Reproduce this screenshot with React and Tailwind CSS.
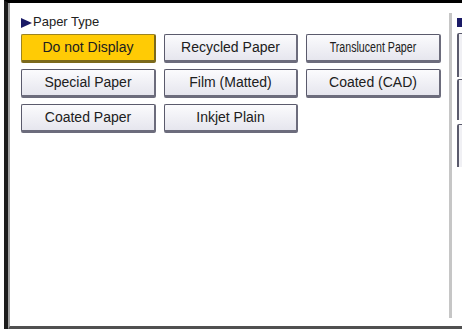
import React from 'react'

const rows = [
  ['Do not Display', 'Recycled Paper', 'Translucent Paper'],
  ['Special Paper', 'Film (Matted)', 'Coated (CAD)'],
  ['Coated Paper', 'Inkjet Plain'],
]

function PaperButton({ label, selected, narrow, width }) {
  return (
    <div
      className={`h-[29px] ${width} flex items-center justify-center rounded-[2px] border border-b-[3px] border-r-[2px] text-[14px] text-[#202020] ${
        selected
          ? 'bg-[#ffcb05] border-[#9c8420] border-b-[#7c6a1c] border-r-[#7c6a1c]'
          : 'bg-linear-to-b from-[#fbfbfd] to-[#e6e6ee] border-[#5a5a6c] border-b-[#6c6c7c] border-r-[#6c6c7c]'
      }`}
    >
      <span className={narrow ? 'inline-block scale-x-[0.76] whitespace-nowrap' : 'whitespace-nowrap'}>{label}</span>
    </div>
  )
}

export default function App() {
  const widths = ['w-[135px]', 'w-[134px]', 'w-[135px]']

  return (
    <div className="w-[462px] h-[329px] bg-white overflow-hidden pl-[4px]" style={{ fontFamily: '"Liberation Sans", Arial, sans-serif' }}>
      <div className="h-full flex flex-col border-t-[3px] border-t-black border-l-[4px] border-l-[#1c1c1c]">
        <div className="flex-1 min-h-0 flex border-l-[2px] border-l-[#a0a0a0] border-b-[3px] border-b-[#505050]">
          {/* Panel principal */}
          <div className="w-[439px] shrink-0 pl-[11px] pt-[11px]">
            <div className="flex items-center h-[16px] text-[13px] text-[#222]">
              <svg width="11" height="10" viewBox="0 0 11 10" className="mr-[1px] mt-[2px]">
                <polygon points="0,0 11,5 0,10" fill="#1a1a66" />
              </svg>
              <span>Paper Type</span>
            </div>
            <div className="mt-[4px] flex flex-col gap-[6px]">
              {rows.map((row, i) => (
                <div key={i} className="flex gap-[8px]">
                  {row.map((label, j) => (
                    <PaperButton
                      key={label}
                      label={label}
                      width={widths[j]}
                      selected={label === 'Do not Display'}
                      narrow={label === 'Translucent Paper'}
                    />
                  ))}
                </div>
              ))}
            </div>
          </div>

          {/* Separador */}
          <div className="w-[3px] shrink-0 bg-[#c6c6c6] mt-[10px] mb-[8px]" />

          {/* Panel derecho (cortado) */}
          <div className="flex-1 pl-[5px] pt-[15px] flex flex-col">
            <div className="h-[9px] w-full bg-[#1a1a66]" />
            <div className="mt-[6px] h-[44px] border-l border-t border-[#5a5a6c] border-l-[2px] bg-[#f0f0f4] rounded-tl-[2px]" />
            <div className="mt-[2px] h-[41px] border-l border-t border-[#5a5a6c] border-l-[2px] bg-[#f0f0f4] rounded-tl-[2px]" />
            <div className="mt-[4px] h-[43px] border-l border-t border-[#5a5a6c] border-l-[2px] bg-[#f0f0f4] rounded-tl-[2px]" />
          </div>
        </div>
      </div>
    </div>
  )
}
